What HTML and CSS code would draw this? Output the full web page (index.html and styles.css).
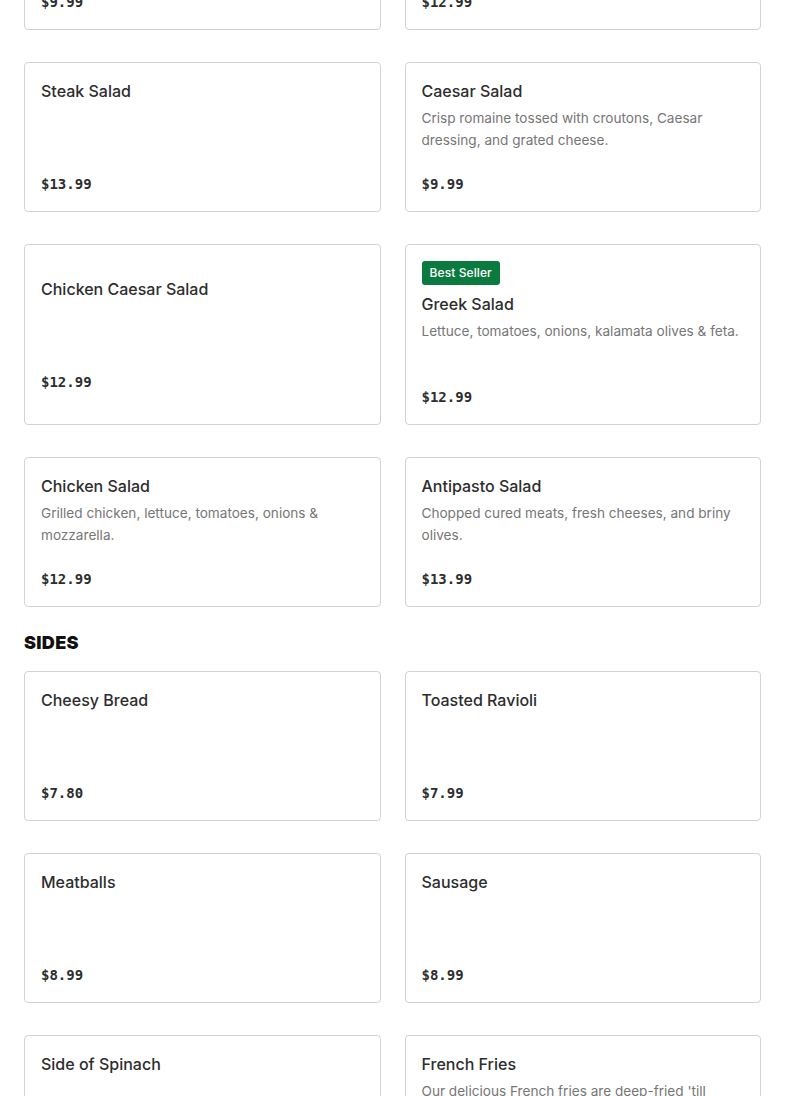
FILE: index.html
```html
<!DOCTYPE html>
<html lang="en">
<head>
<meta charset="utf-8">
<title>Menu</title>
<link rel="stylesheet" href="styles.css">
</head>
<body>
<main class="menu">
  <section class="grid">
    <article class="card">
      <h3 class="title">Garden Salad</h3>
      <p class="desc"></p>
      <div class="price">$9.99</div>
    </article>
    <article class="card">
      <h3 class="title">House Salad</h3>
      <p class="desc"></p>
      <div class="price">$12.99</div>
    </article>
    <article class="card">
      <h3 class="title">Steak Salad</h3>
      <p class="desc"></p>
      <div class="price">$13.99</div>
    </article>
    <article class="card">
      <h3 class="title">Caesar Salad</h3>
      <p class="desc">Crisp romaine tossed with croutons, Caesar dressing, and grated cheese.</p>
      <div class="price">$9.99</div>
    </article>
    <article class="card">
      <h3 class="title">Chicken Caesar Salad</h3>
      <p class="desc"></p>
      <div class="price">$12.99</div>
    </article>
    <article class="card">
      <span class="badge">Best Seller</span>
      <h3 class="title">Greek Salad</h3>
      <p class="desc">Lettuce, tomatoes, onions, kalamata olives &amp; feta.</p>
      <div class="price">$12.99</div>
    </article>
    <article class="card">
      <h3 class="title">Chicken Salad</h3>
      <p class="desc">Grilled chicken, lettuce, tomatoes, onions &amp; mozzarella.</p>
      <div class="price">$12.99</div>
    </article>
    <article class="card">
      <h3 class="title">Antipasto Salad</h3>
      <p class="desc">Chopped cured meats, fresh cheeses, and briny olives.</p>
      <div class="price">$13.99</div>
    </article>
  </section>

  <h2 class="section-title">SIDES</h2>
  <section class="grid">
    <article class="card">
      <h3 class="title">Cheesy Bread</h3>
      <p class="desc"></p>
      <div class="price">$7.80</div>
    </article>
    <article class="card">
      <h3 class="title">Toasted Ravioli</h3>
      <p class="desc"></p>
      <div class="price">$7.99</div>
    </article>
    <article class="card">
      <h3 class="title">Meatballs</h3>
      <p class="desc"></p>
      <div class="price">$8.99</div>
    </article>
    <article class="card">
      <h3 class="title">Sausage</h3>
      <p class="desc"></p>
      <div class="price">$8.99</div>
    </article>
    <article class="card">
      <h3 class="title">Side of Spinach</h3>
      <p class="desc"></p>
      <div class="price">$5.99</div>
    </article>
    <article class="card">
      <h3 class="title">French Fries</h3>
      <p class="desc">Our delicious French fries are deep-fried 'till golden brown and crispy.</p>
      <div class="price">$4.99</div>
    </article>
  </section>
</main>
</body>
</html>
```

FILE: styles.css
```css
* { box-sizing: border-box; }

html, body {
  margin: 0;
  padding: 0;
  background: #ffffff;
}

body {
  font-family: Inter, "Noto Sans", "Liberation Sans", sans-serif;
  color: #2d2d2d;
  overflow: hidden;
}

.menu {
  padding: 0 24px;
  margin-top: -120px;
}

.grid {
  display: grid;
  grid-template-columns: 1fr 1fr;
  column-gap: 24px;
  row-gap: 32px;
}

.card {
  border: 1px solid #d3d3d3;
  border-radius: 4px;
  padding: 16px;
  min-height: 150px;
  display: flex;
  flex-direction: column;
  justify-content: center;
  align-items: flex-start;
  background: #fff;
}

.badge {
  display: inline-block;
  background: #0b7a3f;
  color: #ffffff;
  font-size: 12px;
  font-weight: 500;
  line-height: 24px;
  height: 24px;
  padding: 0 8px;
  border-radius: 3px;
  margin-bottom: 7px;
  letter-spacing: 0.1px;
}

.title {
  margin: 0;
  font-size: 16px;
  font-weight: 500;
  line-height: 24px;
  color: #2d2d2d;
}

.desc {
  margin: 4px 0 0;
  min-height: 44px;
  font-size: 13.6px;
  line-height: 22px;
  color: #767676;
  letter-spacing: 0;
}

.price {
  margin-top: 22px;
  font-family: "DejaVu Sans Mono", "Liberation Mono", monospace;
  font-weight: 700;
  font-size: 14px;
  line-height: 22px;
  color: #2d2d2d;
}

.section-title {
  margin: 24px 0 16px;
  font-size: 18px;
  font-weight: 900;
  line-height: 24px;
  color: #111111;
  letter-spacing: 0.3px;
}
```
